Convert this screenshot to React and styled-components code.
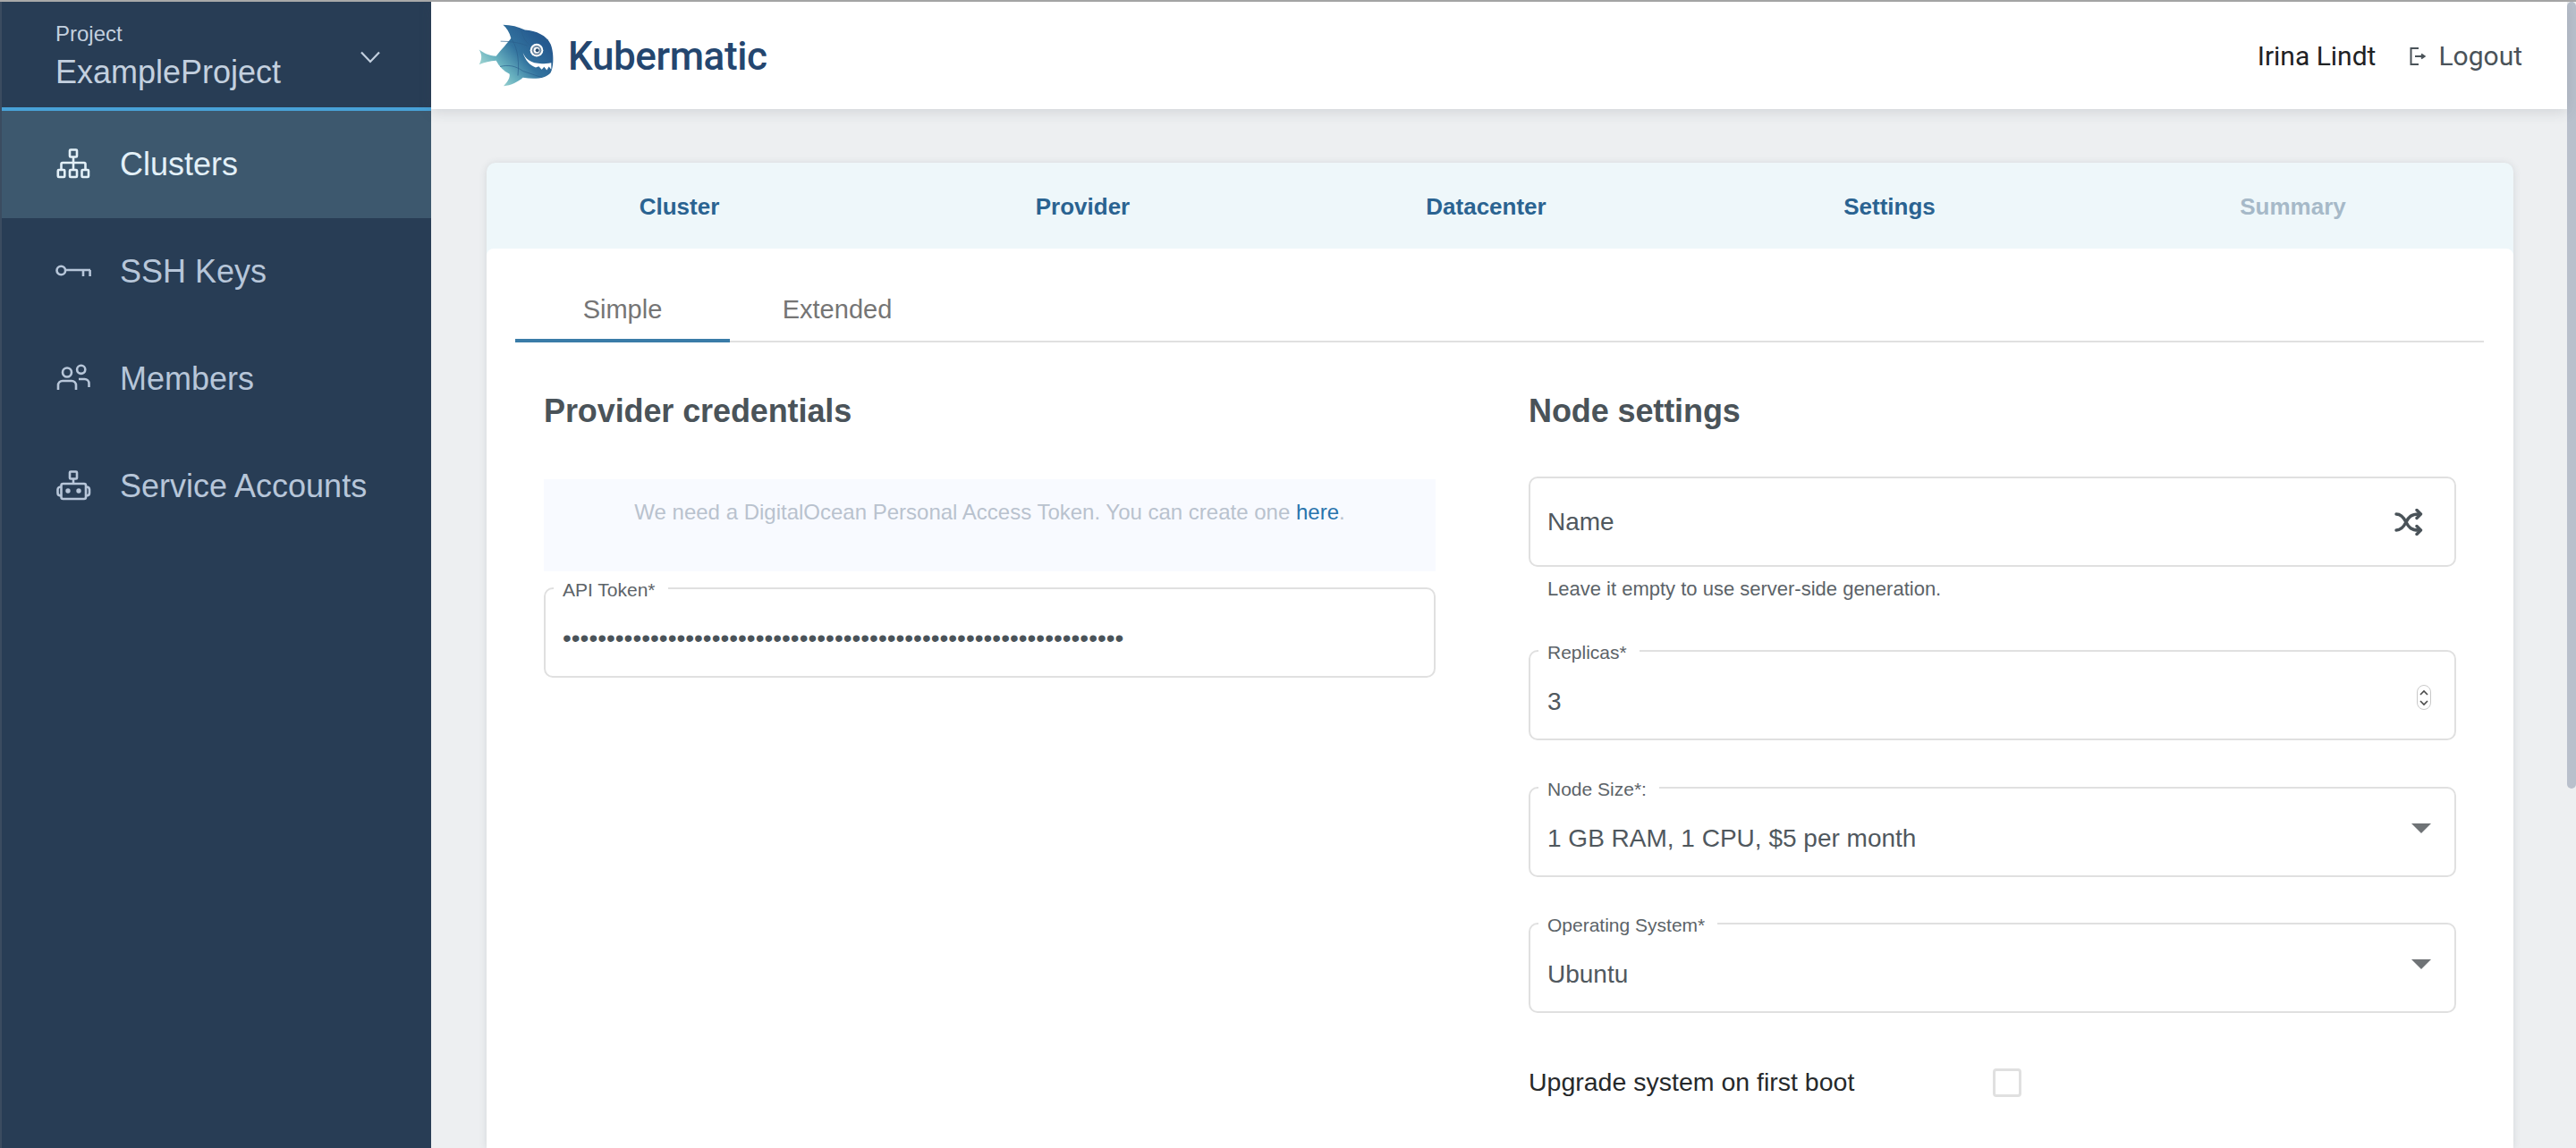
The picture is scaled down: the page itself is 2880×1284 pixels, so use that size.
import React from "react";
import styled, { createGlobalStyle } from "styled-components";

const GlobalStyle = createGlobalStyle`
  html, body {
    margin: 0;
    height: 100%;
    overflow: hidden;
    background: #edeff1;
    font-family: "Liberation Sans", Arial, sans-serif;
  }
  * { box-sizing: border-box; }
`;

const Page = styled.div`
  height: 1284px;
  display: flex;
  flex-direction: column;
  overflow: hidden;
`;

const TopEdge = styled.div`
  height: 2px;
  flex: none;
  background: #a9a9a9;
`;

const Frame = styled.div`
  flex: 1;
  min-height: 0;
  display: flex;
`;

const Sidebar = styled.aside`
  width: 482px;
  flex: none;
  background: #283d55;
  border-left: 2px solid #3b4c60;
`;

const ProjectPicker = styled.div`
  height: 122px;
  padding: 22px 0 0 60px;
  border-bottom: 4px solid #48a2d8;
  position: relative;
  color: #c3d0df;
`;

const ProjectLabel = styled.div`
  font-size: 24px;
  line-height: 28px;
`;

const ProjectName = styled.div`
  font-size: 36px;
  line-height: 42px;
  margin-top: 8px;
`;

const Chevron = styled.svg`
  position: absolute;
  left: 400px;
  top: 55px;
`;

const NavItem = styled.div`
  height: 120px;
  display: flex;
  align-items: center;
  gap: 32px;
  padding: 0 0 0 60px;
  font-size: 36px;
  color: ${(p) => (p.$active ? "#e3f0f8" : "#b7c6d9")};
  background: ${(p) => (p.$active ? "#3d586e" : "transparent")};
`;

const NavIcon = styled.svg`
  width: 40px;
  height: 40px;
  flex: none;
  fill: none;
  stroke: currentColor;
  stroke-width: 2.6;
`;

const Main = styled.div`
  flex: 1;
  min-width: 0;
  display: flex;
  flex-direction: column;
`;

const Header = styled.header`
  height: 120px;
  flex: none;
  background: #fff;
  box-shadow: 0 3px 14px rgba(60, 70, 80, 0.16);
  display: flex;
  align-items: center;
  padding: 0 0 0 51px;
  position: relative;
  z-index: 1;
`;

const Brand = styled.div`
  font-family: Roboto, sans-serif;
  font-weight: 500;
  font-size: 44px;
  color: #24466f;
  margin-left: 12px;
  padding-top: 2px;
  letter-spacing: -0.4px;
`;

const UserName = styled.div`
  margin-left: auto;
  padding-top: 1px;
  font-family: Roboto, sans-serif;
  font-weight: 400;
  font-size: 30px;
  color: #1f2224;
`;

const Logout = styled.div`
  display: flex;
  align-items: center;
  gap: 14px;
  margin: 0 50px 0 38px;
  padding-top: 1px;
  font-family: Roboto, sans-serif;
  font-weight: 400;
  font-size: 30px;
  color: #4a5359;
`;

const Content = styled.main`
  flex: 1;
  min-height: 0;
  padding: 60px 60px 0 62px;
  overflow: hidden;
`;

const Card = styled.section`
  background: #eef7fa;
  border-radius: 10px 10px 0 0;
  box-shadow: 0 1px 8px rgba(60, 70, 80, 0.14);
  height: 100%;
  overflow: hidden;
`;

const Steps = styled.nav`
  height: 96px;
  padding-top: 2px;
  display: grid;
  grid-template-columns: repeat(5, 451px);
  margin-left: -10px;
  align-items: center;
  text-align: center;
  font-size: 26px;
  font-weight: 700;
`;

const Step = styled.div`
  color: ${(p) => (p.$disabled ? "#a6b9c8" : "#2a6391")};
`;

const CardBody = styled.div`
  background: #fff;
  border-radius: 8px 8px 0 0;
  height: 100%;
  padding: 33px 33px 0 32px;
`;

const Tabs = styled.div`
  display: flex;
  height: 72px;
  border-bottom: 2px solid #e0e0e0;
`;

const Tab = styled.div`
  width: 240px;
  height: 72px;
  display: flex;
  align-items: center;
  justify-content: center;
  padding-top: 3px;
  font-size: 29px;
  color: #757575;
  border-bottom: 4px solid ${(p) => (p.$active ? "#3a7ca8" : "transparent")};
`;

const Columns = styled.div`
  display: grid;
  grid-template-columns: 997px 1037px;
  column-gap: 104px;
  padding: 55px 0 0 32px;
`;

const Heading = styled.h2`
  margin: 0;
  font-size: 36px;
  line-height: 44px;
  font-weight: 700;
  letter-spacing: -0.1px;
  color: #4a5359;
`;

const InfoBox = styled.div`
  height: 103px;
  margin: 54px 0 18px;
  padding-top: 23px;
  background: #f8faff;
  text-align: center;
  font-size: 24px;
  line-height: 28px;
  color: #b9c2ce;

  a {
    color: #2a74ad;
    text-decoration: none;
  }
`;

const Field = styled.div`
  height: 101px;
  border: 2px solid #e0e0e0;
  border-radius: 10px;
  padding: 0 19px;
  display: flex;
  align-items: center;
  justify-content: space-between;
  position: relative;
  color: #50585e;
  font-size: 28px;
  margin-bottom: ${(p) => p.$gap || 0}px;
  margin-top: ${(p) => p.$top || 0}px;
`;

const FieldLabel = styled.label`
  position: absolute;
  left: 9px;
  top: -11px;
  padding: 0 14px 0 10px;
  background: #fff;
  font-size: 21px;
  line-height: 24px;
  color: #5c6368;
`;

const Value = styled.span`
  padding-top: ${(p) => (p.$plain ? 1 : 15)}px;
`;

const Dots = styled.span`
  padding-top: 12px;
  color: #4a5359;
`;

const Hint = styled.div`
  margin: 12px 0 55px 21px;
  font-size: 22px;
  line-height: 26px;
  color: #5c6368;
`;

const Caret = styled.span`
  width: 0;
  height: 0;
  margin-right: 7px;
  margin-top: -8px;
  border-left: 11px solid transparent;
  border-right: 11px solid transparent;
  border-top: 11px solid #6f7376;
`;

const ShuffleSlot = styled.span`
  display: flex;
  margin-right: 16px;
`;

const SpinnerSlot = styled.span`
  display: flex;
  margin: 4px 7px 0 0;
`;

const CheckRow = styled.div`
  display: flex;
  align-items: center;
  margin-top: 61px;
  font-size: 28.5px;
  color: #26292b;
`;

const CheckLabel = styled.span`
  width: 519px;
`;

const Checkbox = styled.span`
  width: 32px;
  height: 32px;
  border: 3px solid #e0e0e0;
  border-radius: 4px;
`;

const ScrollTrack = styled.div`
  width: 10px;
  flex: none;
  background: #edeff1;
`;

const ScrollThumb = styled.div`
  height: 880px;
  background: #b9c0cc;
  border-radius: 5px;
`;

const ClustersIcon = () => (
  <NavIcon viewBox="0 0 40 40">
    <rect x="16" y="3.5" width="8" height="8" rx="1" />
    <path d="M20 11.5V18M6.5 25V19.5a1.5 1.5 0 0 1 1.5-1.5h24a1.5 1.5 0 0 1 1.5 1.5V25M20 18v7" />
    <rect x="2.8" y="26" width="7.5" height="8" rx="1" />
    <rect x="16" y="26" width="8" height="8" rx="1" />
    <rect x="29.5" y="26" width="7.5" height="8" rx="1" />
  </NavIcon>
);

const KeyIcon = () => (
  <NavIcon viewBox="0 0 40 40">
    <circle cx="6.3" cy="18.5" r="4.8" />
    <path d="M11 18h28M31 18v7M38.6 18v7" />
  </NavIcon>
);

const MembersIcon = () => (
  <NavIcon viewBox="0 0 40 40">
    <circle cx="13" cy="12.5" r="5" />
    <circle cx="28.7" cy="9.3" r="4.6" />
    <path d="M3 32v-5a5 5 0 0 1 5-5h10a5 5 0 0 1 5 5v5M26 20h6.5a5 5 0 0 1 5 5v4" />
  </NavIcon>
);

const RobotIcon = () => (
  <NavIcon viewBox="0 0 40 40">
    <rect x="16" y="3.5" width="8" height="8" rx="1" />
    <path d="M20 11.5V17" />
    <rect x="6.5" y="17" width="27.5" height="17" rx="2" />
    <path d="M6.5 20.5c-2.5 0-4 1-4 3v4c0 2 1.500 3 4 3M34 20.500c2.500 0 4 1 4 3v4c0 2-1.500 3-4 3" />
    <circle cx="14" cy="25" r="1.400" fill="currentColor" />
    <circle cx="26" cy="25" r="1.400" fill="currentColor" />
  </NavIcon>
);

const FishLogo = () => (
  <svg width="90" height="72" viewBox="100 80 270 215">
    <defs>
      <linearGradient id="fishFill" x1="0.05" y1="0.85" x2="0.85" y2="0.25">
        <stop offset="0" stopColor="#b6e2d8" />
        <stop offset="0.32" stopColor="#69b2c0" />
        <stop offset="0.62" stopColor="#33749f" />
        <stop offset="1" stopColor="#25598f" />
      </linearGradient>
    </defs>
    <path
      fill="url(#fishFill)"
      d="M108 168C125 180 140 188 165 190C185 165 200 150 215 130C210 110 200 95 188 85C215 85 240 92 262 102C300 105 335 120 348 150C360 180 358 230 348 245C335 262 300 270 255 262C240 275 215 290 190 290C205 275 212 262 210 250C190 240 175 225 165 205C145 205 125 212 108 218C118 200 118 185 108 168Z"
    />
    <path
      fill="none"
      stroke="#2b5f8c"
      strokeWidth="2"
      d="M215 130C230 150 245 190 238 255M180 140C215 140 245 145 270 155M250 105C255 125 262 140 275 150M178 225C205 218 230 222 255 240L320 262M340 135C325 140 305 140 285 135"
    />
    <path
      fill="#fff"
      d="M255 178C265 205 290 222 350 212L350 235L342 225L335 237L326 226L318 235L308 224L298 228C280 222 262 205 255 178Z"
    />
    <circle cx="301" cy="170" r="22" fill="#fff" />
    <circle cx="301" cy="170" r="16" fill="#6f8aa3" />
    <circle cx="301" cy="170" r="10" fill="#fff" />
    <circle cx="303" cy="170" r="6" fill="#2a4e70" />
  </svg>
);

const LogoutIcon = () => (
  <svg width="18" height="20" viewBox="0 0 18 20" fill="none" stroke="#4a5359" strokeWidth="2">
    <path d="M10 1H1.500V19H10" />
    <path d="M6 10h10M13 7.500 16.500 10 13 12.500" />
  </svg>
);

const ShuffleIcon = () => (
  <svg width="32" height="30" viewBox="0 0 32 30" fill="none" stroke="#4a5359" strokeWidth="3.400" strokeLinecap="round" strokeLinejoin="round">
    <path d="M2 6c5 0 8 3 11 9s6 9 14 9" />
    <path d="M2 24c5 0 8-3 11-9s6-9 14-9" />
    <path d="M25 1.500l4.500 4.500-4.500 4.500M25 19.500l4.500 4.500-4.500 4.500" />
  </svg>
);

const Spinner = () => (
  <svg width="16" height="28" viewBox="0 0 16 28" fill="#fff" stroke="#c9c9c9" strokeWidth="1">
    <rect x="0.500" y="0.500" width="15" height="27" rx="7.500" />
    <path d="M4 11l4-4 4 4M4 18l4 4 4-4" fill="none" stroke="#4a4a4a" strokeWidth="1.600" />
  </svg>
);

export default function App() {
  return (
    <Page>
      <GlobalStyle />
      <TopEdge />
      <Frame>
        <Sidebar>
          <ProjectPicker>
            <ProjectLabel>Project</ProjectLabel>
            <ProjectName>ExampleProject</ProjectName>
            <Chevron width="24" height="14" viewBox="0 0 24 14" fill="none" stroke="#c3d0df" strokeWidth="2.200">
              <path d="M2 1.500 12 12 22 1.500" />
            </Chevron>
          </ProjectPicker>
          <NavItem $active>
            <ClustersIcon />
            Clusters
          </NavItem>
          <NavItem>
            <KeyIcon />
            SSH Keys
          </NavItem>
          <NavItem>
            <MembersIcon />
            Members
          </NavItem>
          <NavItem>
            <RobotIcon />
            Service Accounts
          </NavItem>
        </Sidebar>
        <Main>
          <Header>
            <FishLogo />
            <Brand>Kubermatic</Brand>
            <UserName>Irina Lindt</UserName>
            <Logout>
              <LogoutIcon />
              Logout
            </Logout>
          </Header>
          <Content>
            <Card>
              <Steps>
                <Step>Cluster</Step>
                <Step>Provider</Step>
                <Step>Datacenter</Step>
                <Step>Settings</Step>
                <Step $disabled>Summary</Step>
              </Steps>
              <CardBody>
                <Tabs>
                  <Tab $active>Simple</Tab>
                  <Tab>Extended</Tab>
                </Tabs>
                <Columns>
                  <div>
                    <Heading>Provider credentials</Heading>
                    <InfoBox>
                      We need a DigitalOcean Personal Access Token. You can create one <a href="#here">here</a>.
                    </InfoBox>
                    <Field>
                      <FieldLabel>API Token*</FieldLabel>
                      <Dots>{"•".repeat(64)}</Dots>
                    </Field>
                  </div>
                  <div>
                    <Heading>Node settings</Heading>
                    <Field $top={51}>
                      <Value $plain>Name</Value>
                      <ShuffleSlot>
                        <ShuffleIcon />
                      </ShuffleSlot>
                    </Field>
                    <Hint>Leave it empty to use server-side generation.</Hint>
                    <Field $gap={52}>
                      <FieldLabel>Replicas*</FieldLabel>
                      <Value>3</Value>
                      <SpinnerSlot>
                        <Spinner />
                      </SpinnerSlot>
                    </Field>
                    <Field $gap={51}>
                      <FieldLabel>Node Size*:</FieldLabel>
                      <Value>1 GB RAM, 1 CPU, $5 per month</Value>
                      <Caret />
                    </Field>
                    <Field>
                      <FieldLabel>Operating System*</FieldLabel>
                      <Value>Ubuntu</Value>
                      <Caret />
                    </Field>
                    <CheckRow>
                      <CheckLabel>Upgrade system on first boot</CheckLabel>
                      <Checkbox />
                    </CheckRow>
                  </div>
                </Columns>
              </CardBody>
            </Card>
          </Content>
        </Main>
        <ScrollTrack>
          <ScrollThumb />
        </ScrollTrack>
      </Frame>
    </Page>
  );
}
